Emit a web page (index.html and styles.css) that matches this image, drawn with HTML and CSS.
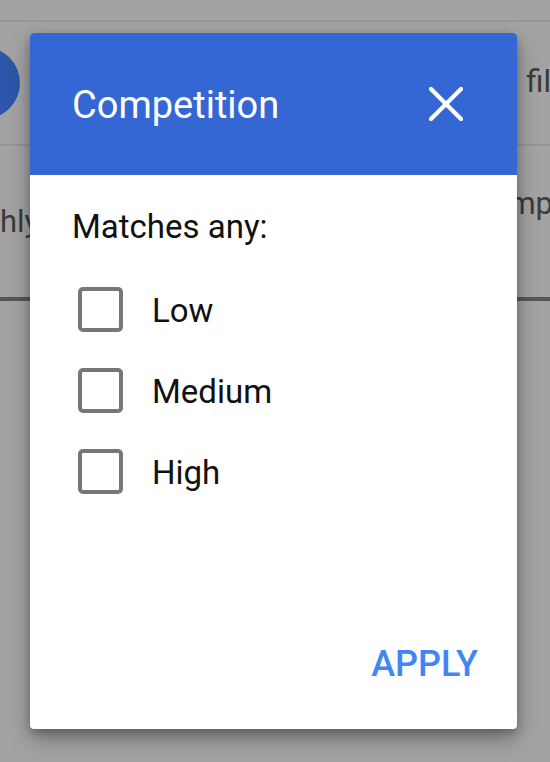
FILE: index.html
```html
<!DOCTYPE html>
<html>
<head>
<meta charset="utf-8">
<link rel="stylesheet" href="styles.css">
</head>
<body>
<div class="page">
  <div class="band band-top"></div>
  <div class="band band-search">
    <div class="avatar"></div>
    <div class="bg-text bg-fil">fil</div>
  </div>
  <div class="band band-head">
    <div class="bg-text bg-hly">hly</div>
    <div class="bg-text bg-mp">mp</div>
  </div>
</div>

<div class="dialog">
  <div class="dialog-header">
    <div class="dialog-title">Competition</div>
    <svg class="close" width="34" height="34" viewBox="0 0 34 34" aria-label="Close">
      <path d="M2 2 L32 32 M32 2 L2 32" stroke="#ffffff" stroke-width="4.2" stroke-linecap="square" fill="none"/>
    </svg>
  </div>
  <div class="dialog-body">
    <div class="matches">Matches any:</div>
    <div class="options">
      <label class="option"><span class="box"></span><span class="opt-label">Low</span></label>
      <label class="option"><span class="box"></span><span class="opt-label">Medium</span></label>
      <label class="option"><span class="box"></span><span class="opt-label">High</span></label>
    </div>
    <div class="footer">
      <span class="apply">APPLY</span>
    </div>
  </div>
</div>
</body>
</html>
```
FILE: styles.css
```css
html, body {
  margin: 0;
  padding: 0;
}
body {
  width: 550px;
  height: 762px;
  overflow: hidden;
  background: #a3a3a3;
  font-family: Roboto, "Noto Sans", sans-serif;
  position: relative;
}
.page {
  display: flex;
  flex-direction: column;
}
.band-top {
  height: 20px;
  border-bottom: 2px solid #979797;
}
.band-search {
  height: 122px;
  border-bottom: 2px solid #979797;
  display: flex;
  align-items: flex-start;
  justify-content: space-between;
}
.avatar {
  width: 72px;
  height: 72px;
  border-radius: 50%;
  background: #2c56a9;
  margin-left: -52px;
  margin-top: 25px;
  flex: none;
}
.bg-text {
  color: #3b3b3b;
  font-size: 31px;
  line-height: 31px;
  white-space: nowrap;
}
.bg-fil {
  margin-top: 44px;
  margin-right: -1px;
}
.band-head {
  height: 151px;
  border-bottom: 4px solid #565656;
  display: flex;
  justify-content: space-between;
  align-items: flex-start;
}
.bg-hly {
  margin-top: 60px;
  margin-left: 0;
}
.bg-mp {
  margin-top: 42px;
  margin-right: -3px;
  font-size: 31px;
}

.dialog {
  position: absolute;
  left: 30px;
  top: 33px;
  width: 487px;
  height: 696px;
  background: #ffffff;
  border-radius: 4px;
  overflow: hidden;
  box-shadow: 0 10px 22px rgba(0,0,0,0.3), 0 4px 8px rgba(0,0,0,0.22);
  display: flex;
  flex-direction: column;
}
.dialog-header {
  height: 142px;
  flex: none;
  background: #3567d4;
  display: flex;
  align-items: center;
  justify-content: space-between;
  padding: 0 54px 0 42px;
}
.dialog-title {
  color: #ffffff;
  font-size: 38px;
  line-height: 38px;
  margin-top: 1px;
}
.close {
  display: block;
  flex: none;
}
.dialog-body {
  flex: 1;
  display: flex;
  flex-direction: column;
  padding: 0 39px 0 42px;
}
.matches {
  margin-top: 35px;
  font-size: 33px;
  line-height: 33px;
  color: #111111;
}
.options {
  margin-top: 26px;
  display: flex;
  flex-direction: column;
}
.option {
  height: 81px;
  display: flex;
  align-items: center;
  gap: 29px;
  padding-left: 6px;
}
.box {
  width: 45px;
  height: 45px;
  box-sizing: border-box;
  border: 4.5px solid #777777;
  border-radius: 5px;
  flex: none;
}
.opt-label {
  font-size: 33px;
  line-height: 33px;
  color: #111111;
  margin-top: 2px;
}
.footer {
  margin-top: auto;
  display: flex;
  justify-content: flex-end;
  padding-bottom: 47px;
}
.apply {
  font-size: 36px;
  line-height: 36px;
  font-weight: 500;
  color: #4285f4;
}
```
